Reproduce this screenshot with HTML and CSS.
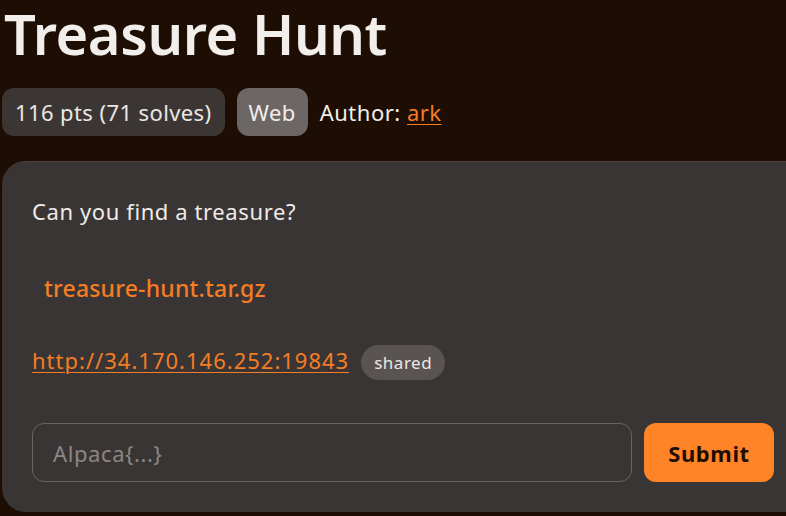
FILE: index.html
```html
<!DOCTYPE html>
<html>
<head>
<meta charset="utf-8">
<link rel="stylesheet" href="styles.css">
</head>
<body>
<div class="page">
  <h1 class="title">Treasure Hunt</h1>
  <div class="meta">
    <span class="pill pill-dark">116 pts (71 solves)</span>
    <span class="pill pill-light">Web</span>
    <span class="author">Author: <a href="#" class="link">ark</a></span>
  </div>
  <div class="card">
    <p class="desc">Can you find a treasure?</p>
    <div class="file"><a href="#" class="file-link">treasure-hunt.tar.gz</a></div>
    <div class="conn">
      <a href="#" class="link url">http://34.170.146.252:19843</a>
      <span class="tag">shared</span>
    </div>
    <form class="flag">
      <input class="flag-input" type="text" placeholder="Alpaca{...}">
      <button class="submit" type="button">Submit</button>
    </form>
  </div>
</div>
</body>
</html>
```
FILE: styles.css
```css
html, body {
  margin: 0;
  padding: 0;
  background: #1e0d02;
  overflow: hidden;
  width: 786px;
  height: 516px;
}
body {
  font-family: "Noto Sans", "Open Sans", sans-serif;
  color: #f0ebe8;
}
.page {
  padding: 0 0 0 2px;
}
.title {
  margin: 0;
  padding: 0 0 0 2px;
  font-size: 56px;
  font-weight: 600;
  line-height: 66px;
  letter-spacing: -0.4px;
  color: #f2eeeb;
}
.meta {
  display: flex;
  align-items: center;
  gap: 12px;
  margin-top: 22px;
  height: 48px;
}
.pill {
  display: inline-flex;
  align-items: center;
  height: 48px;
  padding: 0 13px;
  border-radius: 12px;
  font-size: 22px;
  letter-spacing: 0.4px;
  box-sizing: border-box;
}
.pill-dark {
  background: #3b3634;
  color: #ece7e4;
}
.pill-light {
  background: #6c6764;
  color: #f2eeeb;
  padding: 0 12px;
}
.author {
  font-size: 22px;
  letter-spacing: 0.5px;
  color: #f2eeeb;
}
.link {
  color: #f57d24;
  text-decoration: underline;
  text-underline-offset: 3px;
  text-decoration-thickness: 1px;
}
.card {
  margin-top: 25px;
  width: 840px;
  height: 351px;
  box-sizing: border-box;
  background: #393534;
  border-top: 1px solid #4a403d;
  border-radius: 24px;
  padding: 35px 0 0 30px;
}
.desc {
  margin: 0;
  font-size: 22px;
  letter-spacing: 0.6px;
  line-height: 28px;
}
.file {
  margin-top: 47px;
  padding-left: 12px;
}
.file-link {
  color: #f57d24;
  font-size: 23px;
  font-weight: 500;
  letter-spacing: 0.2px;
  text-decoration: none;
}
.conn {
  display: flex;
  align-items: center;
  gap: 12px;
  margin-top: 38px;
}
.url {
  font-size: 22px;
  letter-spacing: 1px;
}
.tag {
  display: inline-flex;
  align-items: center;
  height: 35px;
  margin: 3px 0 -3px 0;
  padding: 0 13px;
  border-radius: 18px;
  background: #595452;
  color: #ece7e4;
  font-size: 17px;
  letter-spacing: 0.5px;
}
.flag {
  display: flex;
  gap: 12px;
  margin: 46px 0 0 0;
}
.flag-input {
  width: 600px;
  height: 59px;
  box-sizing: border-box;
  background: #393534;
  border: 1px solid #6a6462;
  border-radius: 12px;
  padding: 0 20px;
  font-family: inherit;
  font-size: 22px;
  letter-spacing: 0.6px;
  color: #f0ebe8;
  outline: none;
}
.flag-input::placeholder {
  color: #8c8684;
}
.submit {
  width: 130px;
  height: 59px;
  border: none;
  border-radius: 12px;
  background: #ff8427;
  color: #1f0d03;
  font-family: inherit;
  font-size: 22px;
  font-weight: 700;
  letter-spacing: 0.6px;
}
```
